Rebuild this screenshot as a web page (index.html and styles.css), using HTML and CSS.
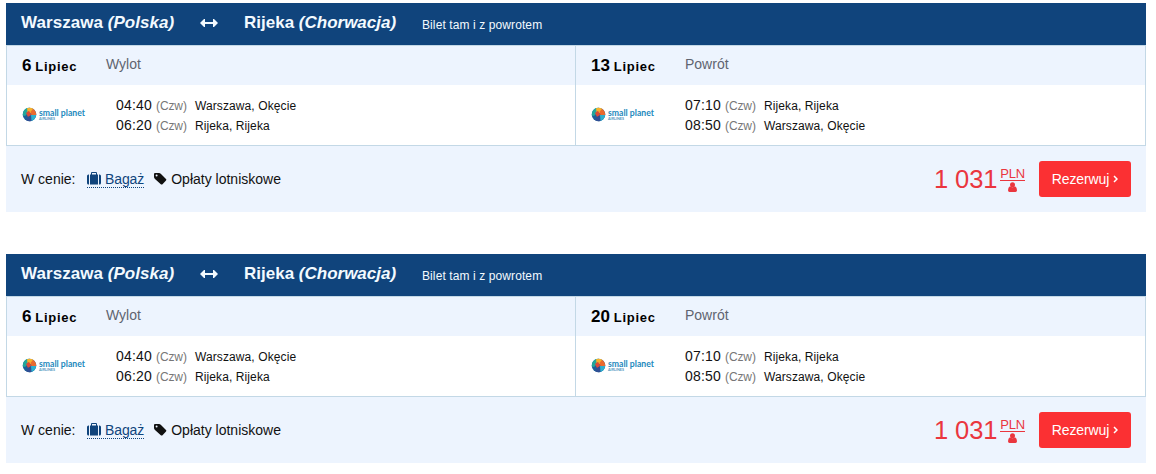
FILE: index.html
```
<!DOCTYPE html>
<html lang="pl">
<head>
    <meta charset="UTF-8">
    <meta name="viewport" content="width=device-width, initial-scale=1.0">
    <title>Warszawa - Rijeka</title>
    <link rel="stylesheet" href="styles.css">
</head>
<body>
  <svg class="sprite">
    <symbol id="arrows" viewBox="0 0 18 10">
      <path d="M0 5 L4 1 H5 V4 H13 V1 H14 L18 5 L14 9 H13 V6 H5 V9 H4 Z"/>
    </symbol>
    <symbol id="suitcase" viewBox="0 0 14 13">
      <path d="M2 2.5 V12.5 H1.5 A1.5 1.5 0 0 1 0 11 V4 A1.5 1.5 0 0 1 1.5 2.5 Z M12 2.5 H12.5 A1.5 1.5 0 0 1 14 4 V11 A1.5 1.5 0 0 1 12.5 12.5 H12 Z"/>
      <path fill-rule="evenodd" d="M3 2.5 H4 V1 Q4 0 5 0 H9 Q10 0 10 1 V2.5 H11 V12.5 H3 Z M5 1 V2.5 H9 V1 Z"/>
    </symbol>
    <symbol id="tag" viewBox="0 0 13 12">
      <path fill-rule="evenodd" d="M0 1 Q0 0 1 0 H5 Q6 0 7 1 L12 6 Q12.8 6.8 12 7.6 L8.5 11.2 Q7.6 12 6.8 11.2 L1 6 Q0 5 0 4 Z M2.6 1.5 A1 1 0 1 0 2.6 3.5 A1 1 0 1 0 2.6 1.5 Z"/>
    </symbol>
    <symbol id="person" viewBox="0 0 9 10">
      <circle cx="4.5" cy="2.7" r="2.5"/>
      <path d="M2 4.2 Q4.5 6.2 7 4.2 Q9 5.2 9 8.2 Q9 10 7.5 10 H1.5 Q0 10 0 8.2 Q0 5.2 2 4.2 Z"/>
    </symbol>
    <symbol id="logo" viewBox="0 0 64 16">
      <circle cx="7.5" cy="8.5" r="6.8" fill="#1d5f98"/>
      <path d="M1.2 6 Q3 1.5 7.5 1.7 L7 6 L3 10 L0.8 9.5 Z" fill="#22a79a"/>
      <path d="M5 2.2 Q8.5 0.8 11.5 3 L9 7.5 L5.5 6 Z" fill="#f6b22c"/>
      <path d="M11 2.7 Q14.5 5.5 14.2 9 L9.5 9.5 L8.5 6 Z" fill="#ea6a2f"/>
      <path d="M4 7 L7 4.8 L9.5 9.5 L6 11 Z" fill="#dc4a38"/>
      <path d="M9 9 L14.2 9 Q13.5 13.5 9.5 15 L7 12 Z" fill="#2cb0d0"/>
      <path d="M6 11 L9 9 L9.5 15 Q6.5 15.8 4 14 Z" fill="#2f4f94"/>
      <text class="logo-name" x="17" y="9.8" textLength="46" lengthAdjust="spacingAndGlyphs">small planet</text>
      <text class="logo-sub" x="17" y="14.3" textLength="16" lengthAdjust="spacingAndGlyphs">AIRLINES</text>
    </symbol>
  </svg>

  <div class="offer">
    <div class="offer-header">
      <span class="city">Warszawa <em>(Polska)</em></span>
      <svg class="arrows"><use href="#arrows"/></svg>
      <span class="city city-to">Rijeka <em>(Chorwacja)</em></span>
      <span class="ticket">Bilet tam i z powrotem</span>
    </div>
    <div class="flights">
      <div class="flight">
        <div class="flight-date">
          <div class="date"><b class="day">6</b> <b class="month">Lipiec</b></div>
          <span class="direction">Wylot</span>
        </div>
        <div class="flight-info">
          <svg class="logo"><use href="#logo"/></svg>
          <div class="hours">
            <div class="row"><span class="time">04:40</span><span class="weekday">(Czw)</span><span class="place">Warszawa, Okęcie</span></div>
            <div class="row"><span class="time">06:20</span><span class="weekday">(Czw)</span><span class="place">Rijeka, Rijeka</span></div>
          </div>
        </div>
      </div>
      <div class="flight">
        <div class="flight-date">
          <div class="date"><b class="day">13</b> <b class="month">Lipiec</b></div>
          <span class="direction">Powrót</span>
        </div>
        <div class="flight-info">
          <svg class="logo"><use href="#logo"/></svg>
          <div class="hours">
            <div class="row"><span class="time">07:10</span><span class="weekday">(Czw)</span><span class="place">Rijeka, Rijeka</span></div>
            <div class="row"><span class="time">08:50</span><span class="weekday">(Czw)</span><span class="place">Warszawa, Okęcie</span></div>
          </div>
        </div>
      </div>
    </div>
    <div class="offer-footer">
      <span class="included">W cenie:</span>
      <a class="baggage"><svg class="suitcase"><use href="#suitcase"/></svg>Bagaż</a>
      <svg class="tag"><use href="#tag"/></svg>
      <span>Opłaty lotniskowe</span>
      <span class="price">1 031</span>
      <div class="currency"><span class="pln">PLN</span><svg class="person"><use href="#person"/></svg></div>
      <button class="book">Rezerwuj <svg class="chevron" viewBox="0 0 5 8"><path d="M1 1 L4 4 L1 7"/></svg></button>
    </div>
  </div>

  <div class="offer">
    <div class="offer-header">
      <span class="city">Warszawa <em>(Polska)</em></span>
      <svg class="arrows"><use href="#arrows"/></svg>
      <span class="city city-to">Rijeka <em>(Chorwacja)</em></span>
      <span class="ticket">Bilet tam i z powrotem</span>
    </div>
    <div class="flights">
      <div class="flight">
        <div class="flight-date">
          <div class="date"><b class="day">6</b> <b class="month">Lipiec</b></div>
          <span class="direction">Wylot</span>
        </div>
        <div class="flight-info">
          <svg class="logo"><use href="#logo"/></svg>
          <div class="hours">
            <div class="row"><span class="time">04:40</span><span class="weekday">(Czw)</span><span class="place">Warszawa, Okęcie</span></div>
            <div class="row"><span class="time">06:20</span><span class="weekday">(Czw)</span><span class="place">Rijeka, Rijeka</span></div>
          </div>
        </div>
      </div>
      <div class="flight">
        <div class="flight-date">
          <div class="date"><b class="day">20</b> <b class="month">Lipiec</b></div>
          <span class="direction">Powrót</span>
        </div>
        <div class="flight-info">
          <svg class="logo"><use href="#logo"/></svg>
          <div class="hours">
            <div class="row"><span class="time">07:10</span><span class="weekday">(Czw)</span><span class="place">Rijeka, Rijeka</span></div>
            <div class="row"><span class="time">08:50</span><span class="weekday">(Czw)</span><span class="place">Warszawa, Okęcie</span></div>
          </div>
        </div>
      </div>
    </div>
    <div class="offer-footer">
      <span class="included">W cenie:</span>
      <a class="baggage"><svg class="suitcase"><use href="#suitcase"/></svg>Bagaż</a>
      <svg class="tag"><use href="#tag"/></svg>
      <span>Opłaty lotniskowe</span>
      <span class="price">1 031</span>
      <div class="currency"><span class="pln">PLN</span><svg class="person"><use href="#person"/></svg></div>
      <button class="book">Rezerwuj <svg class="chevron" viewBox="0 0 5 8"><path d="M1 1 L4 4 L1 7"/></svg></button>
    </div>
  </div>
</body>
</html>
```
FILE: styles.css
```
* {
  box-sizing: border-box;
}

body {
  margin: 0;
  padding: 3px 10px 0 6px;
  background: #fff;
  color: #111;
  font-family: "Liberation Sans", Arial, sans-serif;
  font-size: 14px;
}

svg {
  display: block;
  flex: none;
  fill: currentColor;
}

.sprite {
  display: none;
}

.offer {
  width: 1140px;
  height: 209px;
  margin-bottom: 42px;
  background: #edf4fe;
}

.offer:last-child {
  margin-bottom: 0;
}

/* header */
.offer-header {
  display: flex;
  align-items: center;
  height: 42px;
  padding: 0 15px 2px;
  background: #10447c;
  color: #f3faff;
}

.city {
  width: 179px;
  font-size: 17px;
  font-weight: bold;
  letter-spacing: 0.05px;
  white-space: nowrap;
}

.arrows {
  width: 18px;
  height: 10px;
}

.city-to {
  width: 178px;
  margin-left: 26px;
  letter-spacing: 0;
}

.ticket {
  padding-top: 4px;
  font-size: 12px;
  letter-spacing: 0.1px;
  white-space: nowrap;
}

/* flights */
.flights {
  display: flex;
  height: 101px;
  border: 1px solid #c3d8e6;
}

.flight {
  flex: 1;
}

.flight:first-child {
  flex: none;
  width: 569px;
  border-right: 1px solid #c3d8e6;
}

.flight-date {
  display: flex;
  align-items: baseline;
  height: 39px;
  padding: 10px 15px 0;
}

.date {
  width: 94px;
  white-space: nowrap;
  color: #000;
}

.flight:first-child .date {
  width: 84px;
}

.day {
  font-size: 17px;
}

.month {
  font-size: 13px;
  letter-spacing: 0.7px;
}

.direction {
  position: relative;
  top: -2px;
  color: #5f6470;
}

.flight-info {
  display: flex;
  height: 60px;
  padding: 10px 15px;
  background: #fff;
}

.logo {
  width: 64px;
  height: 16px;
  margin-top: 11px;
}

.logo-name {
  font-family: Lato, sans-serif;
  font-size: 9px;
  font-weight: bold;
  fill: #2389bd;
}

.logo-sub {
  font-family: Lato, sans-serif;
  font-size: 3.8px;
  font-weight: bold;
  fill: #4c95bc;
}

.hours {
  margin-left: 30px;
}

.row {
  display: flex;
  align-items: baseline;
  height: 20px;
  line-height: 20px;
}

.time {
  width: 40px;
  letter-spacing: 0.2px;
}

.weekday {
  width: 39px;
  font-size: 12px;
  letter-spacing: -0.1px;
  color: #777;
}

.place {
  font-size: 12px;
  letter-spacing: 0.1px;
}

/* footer */
.offer-footer {
  display: flex;
  align-items: center;
  height: 66px;
  padding: 0 15px;
}

.included {
  width: 66px;
}

.baggage {
  display: flex;
  align-items: center;
  height: 17px;
  margin-right: 10px;
  border-bottom: 1px dotted #10447c;
  color: #10447c;
  letter-spacing: -0.1px;
}

.suitcase {
  width: 14px;
  height: 13px;
  margin-right: 4px;
}

.tag {
  width: 13px;
  height: 12px;
  margin-right: 4px;
}

.price {
  margin-left: auto;
  font-size: 25.5px;
  letter-spacing: -0.1px;
  color: #ea363e;
}

.currency {
  display: flex;
  flex-direction: column;
  align-items: center;
  margin: 0 14px 0 3px;
  color: #ea363e;
}

.pln {
  height: 14px;
  border-bottom: 1px solid #ea363e;
  font-size: 13px;
  line-height: 13px;
  letter-spacing: -0.2px;
}

.person {
  width: 9px;
  height: 10px;
  margin-top: 1px;
}

.book {
  display: flex;
  align-items: center;
  justify-content: center;
  width: 92px;
  height: 36px;
  padding: 0;
  border: none;
  border-radius: 3px;
  background: #fb3033;
  color: #fff;
  font-family: inherit;
  font-size: 14px;
  letter-spacing: -0.1px;
  cursor: pointer;
}

.chevron {
  width: 5px;
  height: 8px;
  margin-left: 4px;
  fill: none;
  stroke: #fff;
  stroke-width: 1.5;
}
```
